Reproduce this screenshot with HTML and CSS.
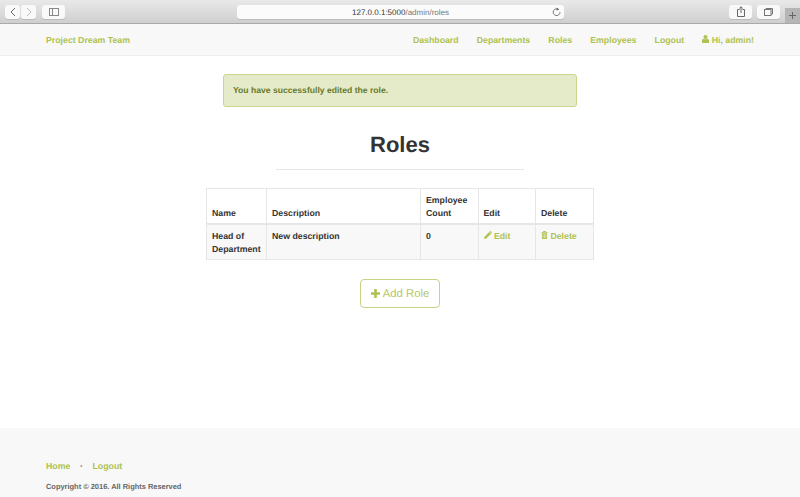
FILE: index.html
```html
<!DOCTYPE html>
<html lang="en">
<head>
<meta charset="utf-8">
<title>Roles</title>
<link rel="stylesheet" href="styles.css">
</head>
<body>
<div class="chrome">
  <div class="chrome-group">
    <div class="nav-pair">
      <div class="cbtn cbtn-s"><svg width="8" height="12" viewBox="0 0 8 12"><path d="M6 2 2 6l4 4" fill="none" stroke="#666" stroke-width="1"/></svg></div>
      <div class="cbtn cbtn-s"><svg width="8" height="12" viewBox="0 0 8 12"><path d="M2 2l4 4-4 4" fill="none" stroke="#bbb" stroke-width="1"/></svg></div>
    </div>
    <div class="cbtn cbtn-l"><svg width="10" height="8" viewBox="0 0 10 8"><rect x=".5" y=".5" width="9" height="7" fill="none" stroke="#888"/><path d="M3.500 .5v7" stroke="#888"/></svg></div>
  </div>
  <div class="urlbar"><span class="url"><span class="url-host">127.0.0.1:5000</span>/admin/roles</span>
    <svg class="reload" width="9" height="10" viewBox="0 0 9 10"><path d="M6.800 2.600A3.400 3.400 0 1 0 8 5.200" fill="none" stroke="#666" stroke-width=".9"/><path d="M4.600.4l2.600 2-2.600 1.200z" fill="#666"/></svg>
  </div>
  <div class="chrome-group chrome-right">
    <div class="cbtn cbtn-l"><svg width="8" height="11" viewBox="0 0 8 11"><path d="M2.500 3.500H.5v7h7v-7h-2M4 7V.8M2.300 2.400 4 .8l1.700 1.600" fill="none" stroke="#666"/></svg></div>
    <div class="cbtn cbtn-l"><svg width="9" height="8" viewBox="0 0 9 8"><rect x=".5" y="1.500" width="6.500" height="6" fill="none" stroke="#777"/><path d="M2 1.500V.5h6.500v5.500H7" fill="none" stroke="#777"/></svg></div>
    <div class="newtab"><svg width="7" height="7" viewBox="0 0 7 7"><path d="M3.500 0v7M0 3.500h7" stroke="#666"/></svg></div>
  </div>
</div>
<nav class="navbar">
  <a class="brand" href="#">Project Dream Team</a>
  <ul class="nav-links">
    <li><a href="#">Dashboard</a></li>
    <li><a href="#">Departments</a></li>
    <li><a href="#">Roles</a></li>
    <li><a href="#">Employees</a></li>
    <li><a href="#">Logout</a></li>
    <li><a href="#"><svg class="icon-user" width="7" height="8" viewBox="0 0 7 8"><circle cx="3.500" cy="2" r="2" fill="#aec251"/><path d="M0 8V5.600C0 4.500.8 3.900 1.800 3.700c1 .7 2.400.7 3.400 0C6.200 3.900 7 4.500 7 5.600V8z" fill="#aec251"/></svg> Hi, admin!</a></li>
  </ul>
</nav>
<main class="content">
  <div class="alert">You have successfully edited the role.</div>
  <h1 class="title">Roles</h1>
  <hr class="rule">
  <table class="roles">
    <thead>
      <tr>
        <th class="c-name">Name</th>
        <th class="c-desc">Description</th>
        <th class="c-count">Employee Count</th>
        <th class="c-edit">Edit</th>
        <th class="c-del">Delete</th>
      </tr>
    </thead>
    <tbody>
      <tr>
        <td>Head of Department</td>
        <td>New description</td>
        <td>0</td>
        <td><a href="#"><svg width="8" height="8" viewBox="0 0 9 9"><path d="M0 9l.6-2.600L6 1l2 2-5.400 5.400zM6.600.4c.4-.4.8-.4 1.100 0l.9.9c.4.300.4.700 0 1.100l-.3.3-2-2z" fill="#aec251"/></svg> Edit</a></td>
        <td><a href="#"><svg width="7" height="8" viewBox="0 0 7 9"><path d="M2.300 0h2.400l.5 1H7v1H0V1h1.800zM.6 2.500h5.800V9H.6z" fill="#aec251"/><path d="M2 3.600V8M3.500 3.600V8M5 3.600V8" stroke="#f5f5f5" stroke-width=".6"/></svg> Delete</a></td>
      </tr>
    </tbody>
  </table>
  <a class="btn-add" href="#"><svg width="9" height="9" viewBox="0 0 9 9"><path d="M3.200 0h2.600v3.200H9v2.600H5.800V9H3.200V5.800H0V3.200h3.200z" fill="#aec251"/></svg> Add Role</a>
</main>
<footer class="footer">
  <ul class="foot-links">
    <li><a href="#">Home</a></li>
    <li class="dot">·</li>
    <li><a href="#">Logout</a></li>
  </ul>
  <p class="copy">Copyright © 2016. All Rights Reserved</p>
</footer>
</body>
</html>
```
FILE: styles.css
```css
* { box-sizing: border-box; }
html, body { margin: 0; padding: 0; }
body {
  width: 800px;
  height: 497px;
  overflow: hidden;
  display: flex;
  flex-direction: column;
  background: #fff;
  font-family: "Liberation Sans", Arial, sans-serif;
  color: #333;
  text-rendering: geometricPrecision;
}
a { color: #aec251; text-decoration: none; }
ul { list-style: none; margin: 0; padding: 0; }

.chrome {
  height: 24px;
  flex: none;
  display: flex;
  align-items: center;
  justify-content: space-between;
  padding: 0 0 0 5px;
  background: linear-gradient(#e9e9e9, #cfcfcf);
  border-bottom: 1px solid #a9a9a9;
  position: relative;
}
.chrome-group { display: flex; align-items: center; gap: 6px; }
.chrome-right { gap: 5px; }
.nav-pair { display: flex; gap: 1px; }
.cbtn {
  height: 14px;
  background: #f9f9f9;
  border-radius: 3px;
  display: flex;
  align-items: center;
  justify-content: center;
  box-shadow: 0 1px 0 #bbb;
}
.cbtn-s { width: 15px; }
.cbtn-l { width: 23px; }
.newtab {
  width: 15px;
  height: 15px;
  margin-top: 8px;
  background: #b5b5b5;
  display: flex;
  align-items: center;
  justify-content: center;
}
.urlbar {
  width: 327px;
  height: 14px;
  background: #fbfbfb;
  border-radius: 3px;
  box-shadow: 0 1px 0 #bbb;
  display: flex;
  align-items: center;
  justify-content: center;
  position: absolute;
  left: 237px;
  top: 5px;
}
.url { font-size: 8px; color: #777; }
.url-host { color: #333; }
.reload { position: absolute; right: 3px; top: 2px; }

.navbar {
  height: 32px;
  flex: none;
  display: flex;
  align-items: center;
  justify-content: space-between;
  padding: 0 46px;
  background: #f8f8f8;
  border-bottom: 1px solid #eeeeee;
  font-size: 8.750px;
  font-weight: 700;
}
.nav-links { display: flex; gap: 18.100px; }
.icon-user { vertical-align: -0.5px; }

.content {
  flex: 1;
  display: flex;
  flex-direction: column;
  align-items: center;
  padding-top: 18px;
}
.alert {
  width: 354px;
  height: 33px;
  padding: 0 9px 1px;
  display: flex;
  align-items: center;
  background: #e5ebc9;
  border: 1px solid #c9d68f;
  border-radius: 3px;
  color: #697a2a;
  font-size: 8.600px;
  font-weight: 700;
}
.title {
  margin: 25px 0 0;
  font-size: 22px;
  line-height: 26px;
  font-weight: 700;
  color: #333;
}
.rule {
  width: 248px;
  margin: 11px 0 18px;
  border: 0;
  border-top: 1px solid #e6e6e6;
}
.roles {
  width: 387px;
  table-layout: fixed;
  border-collapse: collapse;
  font-size: 8.750px;
  font-weight: 700;
  line-height: 13px;
}
.roles th, .roles td {
  border: 1px solid #e6e6e6;
  padding: 5px 5px 3px;
  text-align: left;
  vertical-align: bottom;
}
.roles th { border-bottom-width: 2px; }
.roles td { vertical-align: top; background: #f8f8f8; padding: 5px 5px 3px; }
.c-name { width: 60px; }
.c-desc { width: 154px; }
.c-count { width: 57.500px; }
.c-edit { width: 57.500px; }
.c-del { width: 58px; }
.btn-add {
  margin-top: 19px;
  width: 80px;
  height: 29px;
  display: flex;
  align-items: center;
  justify-content: center;
  gap: 3px;
  border: 1px solid #c5d387;
  border-radius: 4px;
  font-size: 11.300px;
  color: #b4c667;
}

.footer {
  height: 69px;
  flex: none;
  padding: 32px 46px 0;
  background: #f8f8f8;
}
.foot-links { display: flex; gap: 9px; font-size: 8.800px; font-weight: 700; line-height: 12px; }
.dot { color: #555; width: 4px; text-align: center; }
.copy { margin: 9px 0 0; font-size: 7.450px; font-weight: 700; color: #666; line-height: 11px; }
```
